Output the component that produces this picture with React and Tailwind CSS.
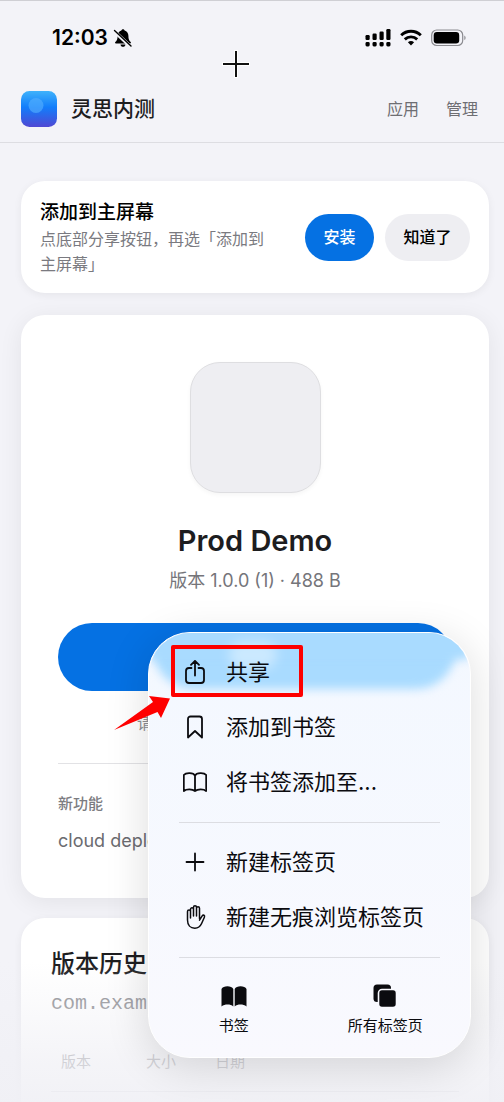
import React from "react";

const StatusBar = () => (
  <div className="flex h-[74px] items-center justify-between border-t border-[#cfcfd4] pl-[52px] pr-[37px] text-black">
    <div className="flex items-center gap-[5px]">
      <span className="text-[21px] font-semibold leading-6">12:03</span>
      <svg width="20" height="20" viewBox="0 0 20 20" aria-label="静音">
        <path
          d="M10 1.2c.8 0 1.5.6 1.6 1.4 2.4.7 3.8 2.7 3.8 5.2 0 3.4.6 4.8 2.3 6.3.5.5.2 1.4-.6 1.4H2.9c-.8 0-1.1-.9-.6-1.4 1.7-1.5 2.3-2.9 2.3-6.3 0-2.5 1.4-4.5 3.8-5.2.1-.8.8-1.4 1.6-1.4z"
          fill="currentColor"
        />
        <path d="M7.5 16.5h5c-.2 1.4-1.2 2.3-2.5 2.3s-2.3-.9-2.5-2.3z" fill="currentColor" />
        <path d="M1.5 3.5 17.5 18.5" stroke="#f3f3f8" strokeWidth="3.6" />
        <path d="M1.5 2.500 18 18" stroke="currentColor" strokeWidth="1.4" strokeLinecap="round" />
      </svg>
    </div>
    <div className="flex items-center gap-[9px]">
      <svg width="26" height="18" viewBox="0 0 26 18" fill="currentColor">
        <rect x="0.5" y="6" width="4.2" height="5" rx="1.2" />
        <rect x="7.5" y="4.5" width="4.2" height="6.5" rx="1.2" />
        <rect x="14.5" y="2.5" width="4.2" height="8.5" rx="1.2" />
        <rect x="21.3" y="0" width="4.2" height="11" rx="1.2" />
        <rect x="0.5" y="13" width="4.2" height="4.5" rx="1.4" />
        <rect x="7.5" y="13" width="4.2" height="4.5" rx="1.4" />
        <rect x="14.5" y="13" width="4.2" height="4.5" rx="1.4" />
        <rect x="21.3" y="13" width="4.2" height="4.5" rx="1.4" />
      </svg>
      <svg width="22" height="17" viewBox="0 0 22 17" fill="none" stroke="currentColor" strokeWidth="2.9">
        <path d="M1.2 6.2a14 14 0 0 1 19.6 0" />
        <path d="M4.8 10.4a9 9 0 0 1 12.4 0" />
        <path d="M7.9 13.2a5 5 0 0 1 6.2 0L11 16.4z" fill="currentColor" stroke="none" />
      </svg>
      <svg width="36" height="18" viewBox="0 0 36 18">
        <rect x="0.7" y="1" width="31" height="15.5" rx="5" fill="none" stroke="#8b8b90" strokeWidth="1.2" />
        <rect x="2.7" y="3" width="25.5" height="11.5" rx="3.2" fill="currentColor" />
        <path d="M33.3 6.500c1.8.8 1.8 3.8 0 4.6z" fill="#8b8b90" />
      </svg>
    </div>
  </div>
);

const Logo = () => (
  <svg width="36" height="36" viewBox="0 0 36 36">
    <defs>
      <linearGradient id="logo-bg" x1="0" y1="0" x2="0" y2="1">
        <stop offset="0" stopColor="#3fb2fb" />
        <stop offset="0.45" stopColor="#127dfb" />
        <stop offset="1" stopColor="#5048d3" />
      </linearGradient>
    </defs>
    <rect width="36" height="36" rx="8.5" fill="url(#logo-bg)" />
    <circle cx="15" cy="14.5" r="7.5" fill="#53adfd" opacity="0.65" />
  </svg>
);

const ShareIcon = () => (
  <path d="M8.500 8H6a3 3 0 0 0-3 3v9a3 3 0 0 0 3 3h12a3 3 0 0 0 3-3v-9a3 3 0 0 0-3-3h-2.500M12 15.500V1M8 4.800l4-4 4 4" />
);

const BookmarkIcon = () => (
  <path d="M5 4a2.500 2.500 0 0 1 2.500-2.500h9A2.500 2.500 0 0 1 19 4v18.500L12 16l-7 6.500z" />
);

const BookIcon = () => (
  <path d="M12 5.500C10.500 2.500 3 2.200.8 5v16c2.500-2.300 8.700-2.200 11.200 0 2.500-2.200 8.700-2.300 11.200 0V5C21 2.200 13.500 2.500 12 5.500zM12 5.500V21" />
);

const PlusIcon = () => <path d="M12 3.500v17M3.500 12h17" />;

const HandIcon = () => (
  <path
    strokeWidth="1.5"
    d="M7.500 13V4.300a1.500 1.500 0 0 1 3 0V11 2.300a1.500 1.500 0 0 1 3 0V11 3.300a1.500 1.500 0 0 1 3 0V13.500M7.500 12V6.500a1.500 1.500 0 0 0-3 0V15c0 5 3 8.200 7.300 8.200 3.500 0 5.500-1.700 6.800-4.700l2.800-6.300c.8-1.900-1.200-2.800-2.200-1.300l-2.700 4.300"
  />
);

const pageActions = [
  { label: "共享", icon: <ShareIcon />, marked: true },
  { label: "添加到书签", icon: <BookmarkIcon /> },
  { label: "将书签添加至...", icon: <BookIcon /> },
];

const tabActions = [
  { label: "新建标签页", icon: <PlusIcon /> },
  { label: "新建无痕浏览标签页", icon: <HandIcon /> },
];

const MenuItem = ({ label, icon, marked }) => (
  <button type="button" className="relative flex h-[55px] w-full items-center gap-[19px] pl-[34px] text-left">
    <svg
      width="24"
      height="24"
      viewBox="0 0 24 24"
      fill="none"
      stroke="currentColor"
      strokeWidth="1.8"
      strokeLinecap="round"
      strokeLinejoin="round"
    >
      {icon}
    </svg>
    <span className="text-[22px] leading-8">{label}</span>
    {marked && (
      <span className="absolute left-[22px] top-px h-[52px] w-[132px] rounded-xs border-4 border-[#fe0000]" />
    )}
  </button>
);

const Divider = () => <hr className="mx-[30px] mb-[11px] mt-[13px] border-t border-[#dcdde2]" />;

const BrowserMenu = () => (
  <div className="absolute bottom-11 right-[33px] w-[323px] rounded-[42px] border border-white bg-[#f8f9fe] text-[#0b0b0f] shadow-[0_8px_44px_rgba(0,0,0,0.14)]">
    {/* tint of the page button seen through the glass */}
    <div className="absolute inset-0 overflow-hidden rounded-[42px] bg-linear-to-b from-[#f3f8ff] to-[#f9f9fe]">
      <div className="absolute -top-6 left-1 right-[14px] h-20 rounded-b-[40px] bg-[#a9dbff] blur-[5px]" />
      <div className="absolute -top-6 left-0 right-0 h-[50px] bg-[#a9dbff] blur-[5px]" />
      <div className="absolute left-20 top-2 h-7 w-12 rounded-full bg-white/40 blur-[6px]" />
    </div>
    <div className="relative pb-[21px] pt-[11px]">
      {pageActions.map((item) => (
        <MenuItem key={item.label} {...item} />
      ))}
      <Divider />
      {tabActions.map((item) => (
        <MenuItem key={item.label} {...item} />
      ))}
      <Divider />
      <div className="grid grid-cols-2 px-[9px] pt-[14px] text-[15px] leading-5">
        <button type="button" className="flex flex-col items-center gap-[7px]">
          <svg width="26" height="26" viewBox="0 0 26 26" fill="currentColor">
            <path d="M.5 6C2 2.200 10.800 2.200 12.300 6v17.500c-2.800-2.600-8.500-2.600-11.800 0z" />
            <path d="M13.700 6c1.500-3.800 10.300-3.800 11.800 0v17.500c-3.300-2.600-9-2.600-11.800 0z" />
          </svg>
          <span>书签</span>
        </button>
        <button type="button" className="flex flex-col items-center gap-[7px]">
          <svg width="26" height="26" viewBox="0 0 26 26" fill="currentColor">
            <rect x="1.5" y="1.5" width="17.5" height="17.5" rx="3.5" />
            <rect x="6.5" y="6.5" width="18" height="18" rx="3.5" stroke="#f9f9fe" strokeWidth="1.6" />
          </svg>
          <span>所有标签页</span>
        </button>
      </div>
    </div>
    <svg className="absolute -left-9 top-[61px]" width="60" height="38" viewBox="0 0 60 38">
      <path d="M1 36 40 8 36 2 57 4.500 48 24 44.500 18z" fill="#fe0000" />
    </svg>
  </div>
);

const App = () => {
  return (
    <div className="relative h-screen overflow-hidden bg-[#f3f3f8] font-[Inter,'Noto_Sans_CJK_SC',sans-serif] text-[#1d1d1f]">
      <StatusBar />
      <header className="flex h-[69px] items-center border-b border-[#dddde2] pl-[21px] pr-[26px] pt-px">
        <Logo />
        <span className="ml-[14px] text-[21px] font-medium leading-8">灵思内测</span>
        <nav className="ml-auto flex gap-[27px] text-base text-[#6e6e73]">
          <a href="#apps">应用</a>
          <a href="#manage">管理</a>
        </nav>
      </header>

      <svg
        className="absolute left-[222px] top-[50px]"
        width="28"
        height="28"
        viewBox="0 0 28 28"
        strokeLinecap="square"
      >
        <path d="M14 2v24M2 14h24" stroke="#ffffff" strokeWidth="4" />
        <path d="M14 2v24M2 14h24" stroke="#111111" strokeWidth="2" />
      </svg>

      <main className="flex flex-col pl-[21px] pr-[15px] pt-[38px]">
        <section className="mb-[22px] flex items-center rounded-3xl bg-white px-[19px] py-4 shadow-[0_2px_8px_rgba(0,0,0,0.06)]">
          <div className="flex-1 pt-[2px]">
            <h2 className="text-[19px] font-medium leading-7 text-black">添加到主屏幕</h2>
            <p className="text-base leading-[25px] text-[#7a7a80]">
              点底部分享按钮，再选「添加到
              <br />
              主屏幕」
            </p>
          </div>
          <div className="flex gap-[11px] text-base font-medium">
            <button type="button" className="h-[47px] w-[69px] rounded-full bg-[#0571e3] text-white">
              安装
            </button>
            <button type="button" className="h-[47px] w-[85px] rounded-full bg-[#eeeef2] text-black">
              知道了
            </button>
          </div>
        </section>

        <section className="mb-5 rounded-3xl bg-white px-[37px] pb-[43px] pt-[47px] shadow-[0_4px_24px_rgba(0,0,0,0.07)]">
          <div className="mx-auto h-[131px] w-[131px] rounded-[30px] border border-[#dedee1] bg-[#eeeef2] shadow-[0_2px_4px_rgba(0,0,0,0.04)]" />
          <h1 className="mt-7 text-center text-[29px] font-semibold leading-10">Prod Demo</h1>
          <p className="text-center text-[18px] leading-10 text-[#75757a]">版本 1.0.0 (1) · 488 B</p>
          <button
            type="button"
            className="mt-[22px] block h-[68px] w-full rounded-full bg-[#0571e3]"
            aria-label="安装"
          />
          <p className="mt-5 pl-[79px] text-base leading-6 text-[#8e8e93]">请</p>
          <hr className="mt-7 border-t border-[#e2e2e5]" />
          <h3 className="mt-7 text-[15px] font-medium leading-6 text-[#7c7c81]">新功能</h3>
          <p className="mt-[11px] text-[18px] leading-7 text-[#6b6b70]">cloud deploy</p>
        </section>

        <section className="rounded-t-3xl bg-white px-[30px] pt-7 shadow-[0_2px_8px_rgba(0,0,0,0.06)]">
          <h2 className="text-2xl font-medium leading-9">版本历史</h2>
          <p className="mt-2 font-['Liberation_Mono',monospace] text-xl leading-7 text-[#85858a]">com.exam</p>
          <table className="mt-8 w-full border-b border-[#d5d5da] text-left text-[15px] leading-6 text-[#86868b]">
            <thead>
              <tr>
                <th className="w-[85px] pb-[17px] pl-[10px] font-normal">版本</th>
                <th className="w-[69px] pb-[17px] pl-[10px] font-normal">大小</th>
                <th className="pb-[17px] pl-[10px] font-normal">日期</th>
              </tr>
            </thead>
          </table>
          <div className="h-12" />
        </section>
      </main>

      <div className="pointer-events-none absolute inset-x-0 bottom-0 h-[140px] bg-linear-to-t from-[#f0f0f5]/90 via-[#f0f0f5]/70 via-30% to-[#f0f0f5]/0" />
      <BrowserMenu />
    </div>
  );
};

export default App;
